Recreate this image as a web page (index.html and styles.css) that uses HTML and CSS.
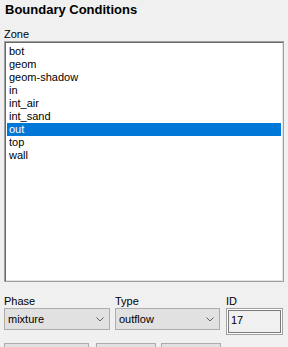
FILE: index.html
```html
<!DOCTYPE html>
<html lang="en">
<head>
    <meta charset="UTF-8">
    <meta name="viewport" content="width=device-width, initial-scale=1.0">
    <title>Boundary Conditions</title>
    <link rel="stylesheet" href="styles.css">
</head>
<body>
    <div class="panel">
        <div class="panel-title">Boundary Conditions</div>

        <div class="field-label zone-label">Zone</div>
        <div class="listbox">
            <div class="list-item">bot</div>
            <div class="list-item">geom</div>
            <div class="list-item">geom-shadow</div>
            <div class="list-item">in</div>
            <div class="list-item">int_air</div>
            <div class="list-item">int_sand</div>
            <div class="list-item selected">out</div>
            <div class="list-item">top</div>
            <div class="list-item">wall</div>
        </div>

        <div class="fields-row">
            <div class="field">
                <div class="field-label">Phase</div>
                <div class="combo">
                    <span>mixture</span>
                    <svg class="chevron" width="8" height="5" viewBox="0 0 8 5"><path d="M0.5 0.5 L4 4 L7.5 0.5" fill="none" stroke="#606060" stroke-width="1"/></svg>
                </div>
            </div>
            <div class="field">
                <div class="field-label">Type</div>
                <div class="combo">
                    <span>outflow</span>
                    <svg class="chevron" width="8" height="5" viewBox="0 0 8 5"><path d="M0.5 0.5 L4 4 L7.5 0.5" fill="none" stroke="#606060" stroke-width="1"/></svg>
                </div>
            </div>
            <div class="field">
                <div class="field-label">ID</div>
                <div class="id-box">17</div>
            </div>
        </div>

        <div class="buttons-row">
            <button class="btn btn-wide"></button>
            <button class="btn"></button>
            <button class="btn"></button>
        </div>
    </div>
</body>
</html>
```

FILE: styles.css
```css
html, body {
    margin: 0;
    padding: 0;
    background-color: #f0f0f0;
}
body {
    font-family: "Liberation Sans", Arial, sans-serif;
    font-size: 11px;
    color: #000;
    overflow: hidden;
}
.panel {
    width: 288px;
    height: 347px;
    padding: 0 4px;
    box-sizing: border-box;
}
.panel-title {
    height: 20px;
    line-height: 20px;
    padding-left: 1px;
    font-size: 13px;
    font-weight: bold;
    color: #000;
}
.field-label {
    height: 13px;
    line-height: 13px;
}
.zone-label {
    margin-top: 8px;
}
.listbox {
    height: 241px;
    border: 1px solid #a0a0a0;
    box-sizing: border-box;
    background-color: #fff;
    box-shadow: inset 1px 1px 0 #696969, inset -1px -1px 0 #e3e3e3;
    padding: 3px 2px 0 2px;
}
.list-item {
    height: 13px;
    line-height: 13px;
    padding-left: 2px;
    white-space: nowrap;
}
.list-item.selected {
    background-color: #0078d7;
    color: #fff;
}
.fields-row {
    display: grid;
    grid-template-columns: 106px 105px 58px;
    column-gap: 5px;
    margin-top: 13px;
}
.fields-row .field:last-child {
    margin-left: 1px;
}
.combo {
    height: 22px;
    border: 1px solid #adadad;
    box-sizing: border-box;
    background-color: #e1e1e1;
    display: flex;
    align-items: center;
    justify-content: space-between;
    padding: 0 5px 0 3px;
}
.chevron {
    display: block;
}
.id-box {
    height: 27px;
    border: 1px solid #a0a0a0;
    box-sizing: border-box;
    box-shadow: inset 0 0 0 1px #fff, inset 0 0 0 2px #7a7a7a;
    padding: 5px 0 0 4px;
    line-height: 13px;
}
.buttons-row {
    display: flex;
    margin-top: 8px;
}
.btn {
    height: 22px;
    width: 60px;
    padding: 0;
    border: 1px solid #adadad;
    background-color: #e1e1e1;
    margin-right: 5px;
}
.btn-wide {
    width: 85px;
    margin-right: 7px;
}
```
